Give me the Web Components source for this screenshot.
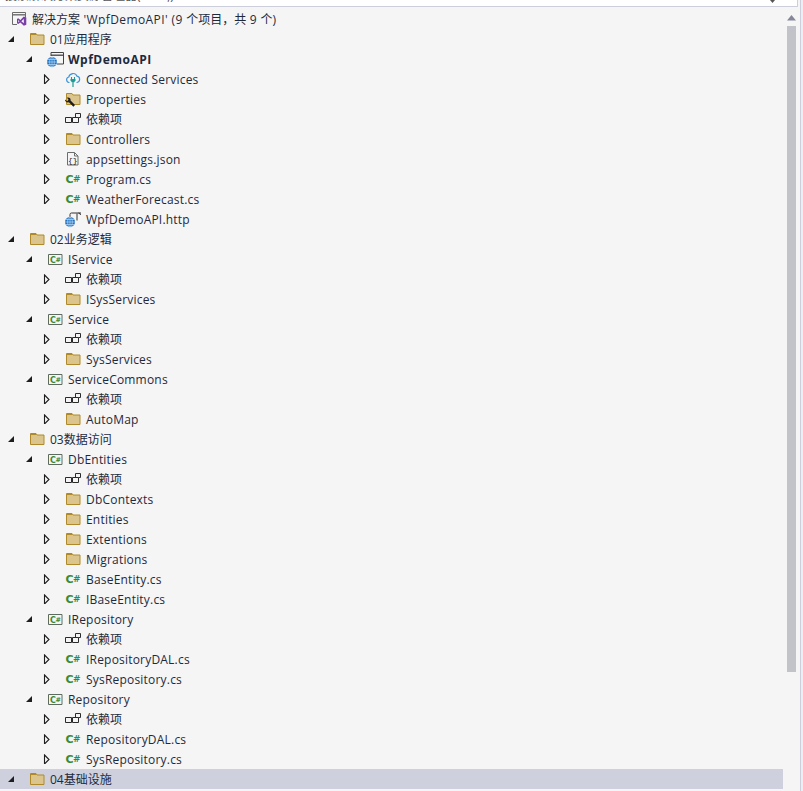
<!DOCTYPE html>
<html>
<head>
<meta charset="utf-8">
<style>
  html, body { margin: 0; padding: 0; height: 100%; background: #eeeef2; overflow: hidden; }
</style>
</head>
<body>
<solution-explorer id="explorer"></solution-explorer>
<script>
const GLOBE = `<circle cx="4" cy="11" r="5" fill="#1c71c4"/><path d="M-1 11h10M4 6v10M-.2 8.500h8.400M-.2 13.500h8.400" stroke="#bcd9f3" stroke-width=".7"/><ellipse cx="4" cy="11" rx="2.300" ry="5" fill="none" stroke="#bcd9f3" stroke-width=".7"/>`;

const ICONS = {
  solution: `<path d="M5 13.500H.5v-12h13v5" fill="none" stroke="#6b6b6b"/><path d="M.5 3.800h13" stroke="#6b6b6b" stroke-width="1.400"/><g transform="translate(5 5.500) scale(.62)"><path fill-rule="evenodd" fill="#7b3fa8" d="M11 0 5.500 5.500 2 3 0 4v7l2 1 3.500-2.500L11 15l4-1.800V1.800zM11 4v7L7 7.500zM2 5.500l2 2-2 2z"/></g>`,
  folder: `<path d="M.5 13.500v-11h5.500l1 1.500h7v9.500z" fill="#dcc48d" stroke="#b08a28"/><path d="M1 3.500h5" stroke="#b08a28"/>`,
  web: `<path d="M3 5V1.500h12.500v11.500H9" fill="#f5f5f5" stroke="#424242"/><path d="M3 4.200h12.500" stroke="#424242" stroke-width="1.300"/>${GLOBE}`,
  connected: `<path d="M3.500 11.500H3A2.800 2.800 0 0 1 2.800 6 4.300 4.300 0 0 1 11 5.200 3.200 3.200 0 0 1 11 11.500h-.5" fill="#f5f5f5" stroke="#3b93d9" stroke-width="1.200"/><path d="M5.500 6v2.500M8.500 6v2.500" stroke="#1e9c93" stroke-width="1.100"/><path d="M4.500 8h5v1.500L8 11.500H6L4.500 9.500z" fill="#1e9c93"/><path d="M7 11.500V16" stroke="#1e9c93" stroke-width="1.200"/>`,
  properties: `<path d="M.5 13.500v-11h5.500l1 1.500h7v9.500z" fill="#dcc48d" stroke="#b08a28"/><path d="M-1 8.500 1 10.300l1.600-1.500L1 6.700C3 6 5 7.500 4.600 9.400L9 14l-1.600 1.800-4.500-4.500C.8 11.700-1.300 10.500-1 8.500z" fill="#1e1e1e"/>`,
  deps: `<path d="M-.5 6.500h6v5h-6zM6.500 6.500h6v5h-6zM9.500 6V2.500h5v4h-2" fill="#f5f5f5" stroke="#2b2b2b"/><path d="M5.500 8.500h1" stroke="#2b2b2b"/>`,
  json: `<path d="M1.500 1.500h7l3.500 3.500v9H1.500z" fill="#f5f5f5" stroke="#6d6d6d"/><path d="M8.500 1.500V5H12" fill="none" stroke="#6d6d6d"/><text x="6.700" y="11.800" text-anchor="middle" font-family="'Liberation Mono',monospace" font-size="8" fill="#222">{}</text>`,
  cs: `<text x="-.5" y="12" font-family="'DejaVu Sans',sans-serif" font-size="11" font-weight="700" fill="#388a34">C</text><text x="7" y="10.500" font-family="'DejaVu Sans',sans-serif" font-size="9" font-weight="700" fill="#388a34">#</text>`,
  http: `<path d="M4 6V3.500Q4 2 5.500 2H15M11 2.500V9.500" fill="none" stroke="#333"/><path d="M12.500 2Q14.500 2 14.500 4" fill="none" stroke="#333"/>${GLOBE}`,
  csproj: `<path d="M.5 3.500h13.500v10H.5z" fill="#f5f5f5" stroke="#5f6b5f"/><text x="2" y="11.500" font-family="'DejaVu Sans',sans-serif" font-size="8" font-weight="700" fill="#388a34">C</text><text x="7.500" y="10.500" font-family="'DejaVu Sans',sans-serif" font-size="6.500" font-weight="700" fill="#388a34">#</text>`
};

// [depth, arrow, icon, label, bold, selected]
const ROWS = [
  [0, '', 'solution', "解决方案 'WpfDemoAPI' (9 个项目，共 9 个)"],
  [1, 'open', 'folder', '01应用程序'],
  [2, 'open', 'web', 'WpfDemoAPI', true],
  [3, 'closed', 'connected', 'Connected Services'],
  [3, 'closed', 'properties', 'Properties'],
  [3, 'closed', 'deps', '依赖项'],
  [3, 'closed', 'folder', 'Controllers'],
  [3, 'closed', 'json', 'appsettings.json'],
  [3, 'closed', 'cs', 'Program.cs'],
  [3, 'closed', 'cs', 'WeatherForecast.cs'],
  [3, '', 'http', 'WpfDemoAPI.http'],
  [1, 'open', 'folder', '02业务逻辑'],
  [2, 'open', 'csproj', 'IService'],
  [3, 'closed', 'deps', '依赖项'],
  [3, 'closed', 'folder', 'ISysServices'],
  [2, 'open', 'csproj', 'Service'],
  [3, 'closed', 'deps', '依赖项'],
  [3, 'closed', 'folder', 'SysServices'],
  [2, 'open', 'csproj', 'ServiceCommons'],
  [3, 'closed', 'deps', '依赖项'],
  [3, 'closed', 'folder', 'AutoMap'],
  [1, 'open', 'folder', '03数据访问'],
  [2, 'open', 'csproj', 'DbEntities'],
  [3, 'closed', 'deps', '依赖项'],
  [3, 'closed', 'folder', 'DbContexts'],
  [3, 'closed', 'folder', 'Entities'],
  [3, 'closed', 'folder', 'Extentions'],
  [3, 'closed', 'folder', 'Migrations'],
  [3, 'closed', 'cs', 'BaseEntity.cs'],
  [3, 'closed', 'cs', 'IBaseEntity.cs'],
  [2, 'open', 'csproj', 'IRepository'],
  [3, 'closed', 'deps', '依赖项'],
  [3, 'closed', 'cs', 'IRepositoryDAL.cs'],
  [3, 'closed', 'cs', 'SysRepository.cs'],
  [2, 'open', 'csproj', 'Repository'],
  [3, 'closed', 'deps', '依赖项'],
  [3, 'closed', 'cs', 'RepositoryDAL.cs'],
  [3, 'closed', 'cs', 'SysRepository.cs'],
  [1, 'open', 'folder', '04基础设施', false, true]
];

class TreeRow extends HTMLElement {
  constructor() {
    super();
    this.attachShadow({ mode: 'open' });
    this.shadowRoot.innerHTML = `
      <style>
        :host {
          display: flex;
          align-items: center;
          height: 20px;
          color: #1e2a3c;
          white-space: nowrap;
        }
        :host([selected]) { background: #cfd0de; }
        .arrow {
          width: 10px;
          height: 10px;
          flex: none;
          margin-left: calc(var(--depth) * 18px - 12px);
          margin-right: 14px;
        }
        .icon { width: 16px; height: 16px; margin-right: 4px; flex: none; display: block; overflow: visible; }
        :host([bold]) .label { font-weight: 700; }
        .label { font-size: 12px; line-height: 20px; padding-top: 1px; }
      </style>
      <svg class="arrow" viewBox="0 0 10 10"></svg>
      <svg class="icon" viewBox="0 0 16 16"></svg>
      <span class="label"><slot></slot></span>
    `;
  }

  connectedCallback() {
    const arrow = this.shadowRoot.querySelector('.arrow');
    const type = this.getAttribute('arrow');
    if (type === 'open') {
      arrow.innerHTML = '<path d="M8 2v6H2z" fill="#1e1e1e"/>';
    } else if (type === 'closed') {
      arrow.innerHTML = '<path d="M2.500 1 7 5.500 2.500 10z" fill="#f5f5f5" stroke="#1e1e1e" stroke-width="1.100"/>';
    }
    this.shadowRoot.querySelector('.icon').innerHTML = ICONS[this.getAttribute('icon')] || '';
  }
}

class SolutionExplorer extends HTMLElement {
  constructor() {
    super();
    this.attachShadow({ mode: 'open' });
    this.shadowRoot.innerHTML = `
      <style>
        :host {
          display: flex;
          flex-direction: column;
          width: 801px;
          height: 791px;
          box-sizing: border-box;
          background: #f5f5f5;
          border-right: 1px solid #cccedb;
          font-family: "Open Sans", "Noto Sans CJK SC", sans-serif;
          overflow: hidden;
        }
        .search {
          flex: none;
          display: flex;
          justify-content: space-between;
          height: 6px;
          width: 797px;
          background: #fff;
          border: solid #cccedb;
          border-width: 0 1px 1px 0;
          overflow: hidden;
          font-size: 12px;
          color: #555;
          white-space: nowrap;
        }
        .search span { margin: -13px 0 0 5px; line-height: 18px; height: 18px; }
        .search svg { margin-right: 22px; }
        .body { flex: 1; display: flex; min-height: 0; padding-top: 2px; }
        .tree { width: 783px; flex: none; }
        .scroll { width: 9px; margin-left: 4px; flex: none; display: flex; flex-direction: column; }
        .up { height: 15px; display: flex; align-items: center; justify-content: center; }
        .up svg { margin-top: 2px; }
        .thumb { height: 646px; background: #c2c3c9; margin-top: 2px; }
      </style>
      <div class="search">
        <span>搜索解决方案资源管理器(Ctrl+;)</span>
        <svg width="5" height="3" viewBox="0 0 5 3"><path d="M0 0h5L2.500 3z" fill="#555"/></svg>
      </div>
      <div class="body">
        <div class="tree"><slot></slot></div>
        <div class="scroll">
          <div class="up"><svg width="9" height="6" viewBox="0 0 9 6"><path d="M4.500 0 9 5.500H0z" fill="#85869a"/></svg></div>
          <div class="thumb"></div>
        </div>
      </div>
    `;
  }
}

customElements.define('tree-row', TreeRow);
customElements.define('solution-explorer', SolutionExplorer);

// Open Sans runs a little narrower than the original UI font, CJK text doesn't
function fillLabel(row, label, spacing) {
  label.split(/([\x20-\x7e]{3,})/).forEach((part, i) => {
    if (i % 2) {
      const run = document.createElement('span');
      run.style.letterSpacing = spacing;
      run.textContent = part;
      row.appendChild(run);
    } else if (part) {
      row.appendChild(document.createTextNode(part));
    }
  });
}

const explorer = document.getElementById('explorer');
ROWS.forEach(([depth, arrow, icon, label, bold, selected]) => {
  const row = document.createElement('tree-row');
  row.style.setProperty('--depth', depth);
  row.setAttribute('arrow', arrow);
  row.setAttribute('icon', icon);
  if (bold) row.setAttribute('bold', '');
  if (selected) row.setAttribute('selected', '');
  fillLabel(row, label, bold ? '.5px' : depth === 0 ? '.4px' : '.2px');
  explorer.appendChild(row);
});
</script>
</body>
</html>
